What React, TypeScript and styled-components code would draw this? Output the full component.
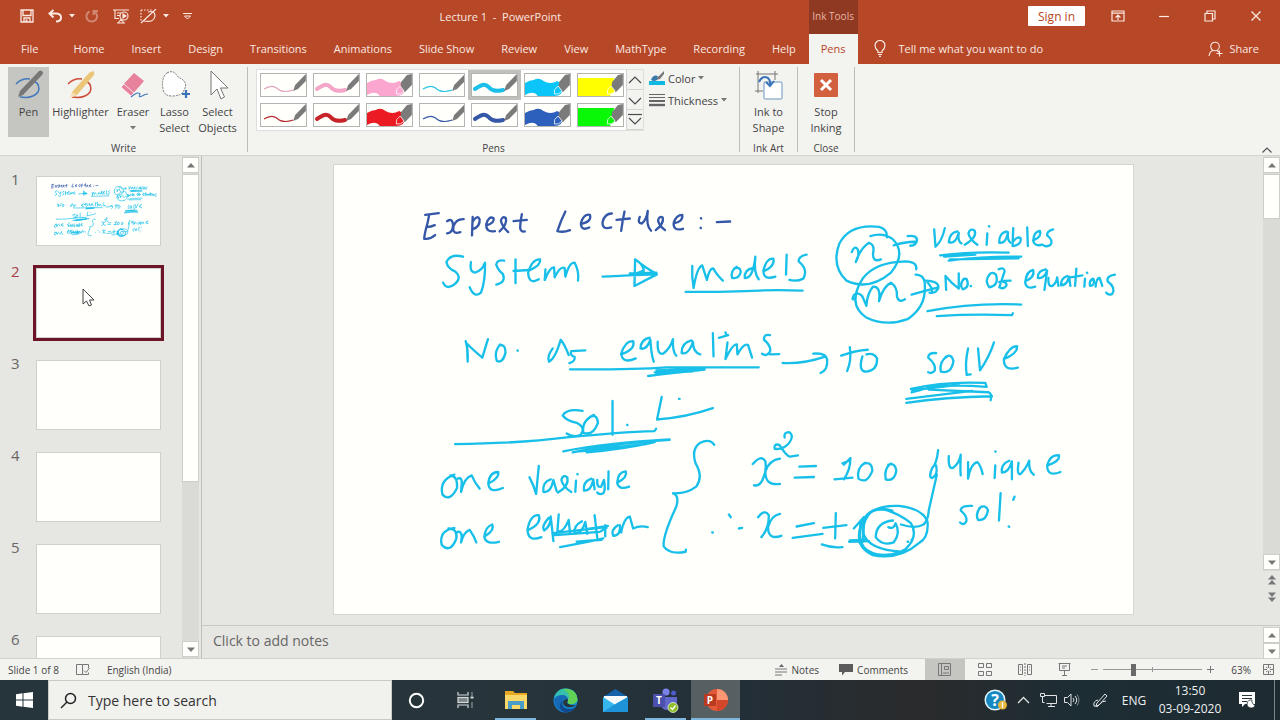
import React from "react";
import styled, { createGlobalStyle } from "styled-components";

const GlobalStyle = createGlobalStyle`
  *, *::before, *::after { box-sizing: border-box; }
  body {
    margin: 0;
    font-family: "Open Sans", "Noto Sans", sans-serif;
    font-size: 11px;
    color: #444;
    background: #e6e6e3;
  }
  button, input {
    font: inherit;
    color: inherit;
    border: 0;
    padding: 0;
    margin: 0;
    background: none;
  }
  svg { display: block; flex: none; }
`;

const Window = styled.div`
  display: grid;
  grid-template-rows: auto auto minmax(0, 1fr) auto auto;
  grid-template-columns: minmax(0, 1fr);
  height: 100vh;
`;

/* ---------- header ---------- */

const Header = styled.header`
  display: grid;
  grid-template-columns: auto auto 1fr;
  grid-template-rows: 34px 30px;
  background: #b64727;
  color: #fbe9e2;
`;

const TitleBar = styled.div`
  display: flex;
  align-items: center;
  padding: 0 0 2px 20px;
`;

const QuickAccess = styled.div`
  display: flex;
  align-items: center;
  gap: 6px;
`;

const IconButton = styled.button<{ $dim?: boolean; $lead?: number }>`
  display: flex;
  align-items: center;
  padding-left: ${(p) => p.$lead ?? 0}px;
  opacity: ${(p) => (p.$dim ? 0.4 : 1)};
`;

const DocTitle = styled.div`
  flex: 1;
  text-align: center;
  white-space: pre;
`;

const ContextTitle = styled.div`
  display: flex;
  align-items: center;
  justify-content: center;
  padding-bottom: 2px;
  font-size: 10px;
  background: #8f3822;
  color: #e9b7a5;
`;

const WindowActions = styled.div`
  display: flex;
  align-items: center;
  justify-content: flex-end;
  gap: 32px;
  padding: 0 17px 2px 0;
`;

const SignIn = styled.button`
  width: 57px;
  height: 20px;
  background: #fff;
  color: #b64727;
  font-size: 12px;
  border-radius: 1px;
  margin-right: -6px;
`;

const Tabs = styled.nav`
  display: flex;
  padding-left: 7px;
`;

const Tab = styled.button<{ $active?: boolean }>`
  height: 30px;
  padding: 0 ${(p) => (p.$active ? 12 : 13)}px 2px ${(p) => (p.$active ? 12 : 14)}px;
  white-space: nowrap;
  background: ${(p) => (p.$active ? "#f3f3f0" : "transparent")};
  color: ${(p) => (p.$active ? "#b64727" : "inherit")};
`;

const FileTab = styled(Tab)`
  padding-right: 21px;
`;

const TellMe = styled.div`
  display: flex;
  align-items: center;
  justify-content: space-between;
  padding: 0 21px 1px 16px;
`;

const InlineLabel = styled.button<{ $gap?: number }>`
  display: flex;
  align-items: center;
  gap: ${(p) => p.$gap ?? 4}px;
  white-space: nowrap;
`;

/* ---------- ribbon ---------- */

const Ribbon = styled.section`
  display: flex;
  height: 92px;
  background: #f3f3f0;
  border-bottom: 1px solid #d3d3d0;
  padding-top: 3px;
`;

const Group = styled.div<{ $width: number }>`
  display: flex;
  flex-direction: column;
  justify-content: space-between;
  width: ${(p) => p.$width}px;
  height: 85px;
  border-right: 1px solid #bdbdba;
`;

const GroupBody = styled.div<{ $indent?: number; $center?: boolean }>`
  display: flex;
  justify-content: ${(p) => (p.$center ? "center" : "flex-start")};
  padding-left: ${(p) => p.$indent ?? 0}px;
`;

const GroupName = styled.div`
  text-align: center;
  font-size: 10px;
  line-height: 12px;
  height: 10px;
`;

const Tool = styled.button<{ $width: number; $active?: boolean }>`
  display: flex;
  flex-direction: column;
  align-items: center;
  width: ${(p) => p.$width}px;
  height: 70px;
  padding-top: 3px;
  line-height: 16px;
  white-space: nowrap;
  background: ${(p) => (p.$active ? "#c5c5c2" : "transparent")};
`;

const ToolText = styled.span`
  display: flex;
  flex-direction: column;
  align-items: center;
  margin-top: 3px;
`;

const Gallery = styled.div`
  display: flex;
  width: 388px;
  height: 62px;
  margin: 2px 5px 0 8px;
  border: 1px solid #dededb;
  background: #fff;
`;

const Swatches = styled.div`
  flex: 1;
  display: grid;
  grid-template-columns: repeat(7, 1fr);
  grid-auto-rows: 24px;
  gap: 6px;
  padding: 3px 2px 3px 3px;
`;

const Swatch = styled.button<{ $active?: boolean }>`
  border: 1px solid #b4b4b1;
  background: #fffffc;
  outline: ${(p) => (p.$active ? "3px solid #c0c0bd" : "none")};
  overflow: hidden;
  svg { width: 100%; height: 100%; }
`;

const GallerySteps = styled.div`
  width: 17px;
  display: grid;
  grid-template-rows: 1fr 1fr 1fr;
  background: #f3f3f0;
`;

const Step = styled.button`
  display: flex;
  align-items: center;
  justify-content: center;
  border: 1px solid #d3d3d0;
  border-width: 0 0 1px 1px;
`;

const PenOptions = styled.div`
  display: flex;
  flex-direction: column;
  gap: 6px;
  padding-top: 3px;
`;

const PenOption = styled(InlineLabel)`
  height: 16px;
`;

const RibbonEnd = styled.div`
  flex: 1;
  display: flex;
  align-items: flex-end;
  justify-content: flex-end;
  padding: 0 8px 2px 0;
`;

/* ---------- workspace ---------- */

const Main = styled.main`
  display: grid;
  grid-template-columns: 182px 17px minmax(0, 1fr);
  min-height: 0;
  background: #e6e6e3;
`;

const SlideList = styled.ol`
  list-style: none;
  margin: 0;
  padding: 17px 0 0 8px;
  overflow: hidden;
  min-height: 0;
`;

const SlideItem = styled.li<{ $active?: boolean }>`
  display: flex;
  height: 92px;
  color: ${(p) => (p.$active ? "#a8424c" : "#666")};
`;

const SlideNumber = styled.span`
  width: 25px;
  padding-left: 3px;
  font-size: 15px;
  line-height: 18px;
  margin-top: -3px;
`;

const Thumb = styled.button<{ $active?: boolean }>`
  position: relative;
  width: 131px;
  height: 76px;
  border: 3px solid ${(p) => (p.$active ? "#6d1427" : "transparent")};
  background-clip: padding-box;
`;

const ThumbPage = styled.span`
  display: block;
  width: 100%;
  height: 100%;
  background: #fffffc;
  border: 1px solid #cfcfcc;
  svg { width: 100%; height: 100%; }
`;

const Pointer = styled.svg`
  position: absolute;
  left: 46px;
  top: 20px;
`;

const ScrollBar = styled.div`
  display: flex;
  flex-direction: column;
  gap: 1px;
  padding: 1px 0;
  width: 17px;
  min-height: 0;
  background: #dadad7;
`;

const ScrollButton = styled.button<{ $plain?: boolean }>`
  display: flex;
  flex: none;
  align-items: center;
  justify-content: center;
  height: ${(p) => (p.$plain ? 17 : 16)}px;
  background: ${(p) => (p.$plain ? "#e6e6e3" : "#fffffc")};
  border: ${(p) => (p.$plain ? "0" : "1px solid #cdcdca")};
`;

const ScrollThumb = styled.div<{ $percent: number }>`
  height: ${(p) => p.$percent}%;
  background: #fffffc;
  border: 1px solid #cdcdca;
`;

const ScrollTrack = styled.div`
  flex: 1;
  min-height: 0;
`;

const EditorScroll = styled.div`
  display: flex;
  flex-direction: column;
  padding-bottom: 20px;
  ${ScrollBar} { flex: 1; }
`;

const Editor = styled.div`
  display: grid;
  grid-template-rows: minmax(0, 1fr) 33px;
  margin-left: 2px;
  min-height: 0;
  border-left: 1px solid #bdbdba;
`;

const Stage = styled.div`
  display: flex;
  min-height: 0;
`;

const Canvas = styled.div`
  flex: 1;
  min-width: 0;
  overflow: hidden;
  padding: 8px 129px 0 131px;
`;

const Slide = styled.div`
  aspect-ratio: 16 / 9;
  background: #fffffc;
  border: 1px solid #d5d5d2;
  svg { width: 100%; height: 100%; }
`;

const NotesPane = styled.div`
  display: flex;
  border-top: 1px solid #c8c8c5;
`;

const NotesInput = styled.input`
  flex: 1;
  padding: 0 0 3px 11px;
  font-size: 14px;
  outline: 0;
  &::placeholder { color: #666; opacity: 1; }
`;

const NotesScroll = styled(ScrollBar)`
  background: none;
  gap: 0;
`;

/* ---------- status bar ---------- */

const StatusBar = styled.footer`
  display: flex;
  align-items: center;
  height: 22px;
  padding: 0 6px 0 8px;
  border-top: 1px solid #d0d0cd;
  background: #f3f3f0;
  font-size: 10px;
`;

const StatusLeft = styled.div`
  flex: 1;
  display: flex;
  align-items: center;
  gap: 17px;
`;

const StatusToggles = styled.div`
  display: flex;
  gap: 20px;
  margin-right: 17px;
`;

const ViewButton = styled.button<{ $active?: boolean }>`
  display: flex;
  align-items: center;
  justify-content: center;
  width: 40px;
  height: 21px;
  background: ${(p) => (p.$active ? "#c5c5c2" : "transparent")};
`;

const Zoom = styled.div`
  display: flex;
  align-items: center;
  gap: 4px;
  padding-left: 5px;
`;

const ZoomSlider = styled.input`
  appearance: none;
  width: 99px;
  height: 14px;
  background:
    linear-gradient(#999, #999) 50% 50% / 1px 5px no-repeat,
    linear-gradient(#999, #999) 0 50% / 100% 1px no-repeat;
  &::-webkit-slider-thumb {
    appearance: none;
    width: 5px;
    height: 12px;
    background: #6a6a6a;
  }
`;

const ZoomValue = styled.button`
  width: 32px;
  margin-right: 8px;
  text-align: right;
`;

/* ---------- task bar ---------- */

const TaskBar = styled.footer`
  display: flex;
  height: 40px;
  background: linear-gradient(90deg, #26343b, #27353b 40%, #232f37 58%, #2a2b2c 72%, #1d2d34 84%, #1e2b31);
  color: #eef1f2;
  font-size: 12px;
`;

const Start = styled.button`
  width: 48px;
  display: flex;
  align-items: center;
  justify-content: center;
`;

const Search = styled.label`
  display: flex;
  align-items: center;
  gap: 11px;
  width: 344px;
  padding-left: 11px;
  background: #f1f1ee;
  border: 1px solid #c9c9c6;
  color: #222;
  font-size: 14px;
  input { flex: 1; outline: 0; min-width: 0; }
  input::placeholder { color: #333; opacity: 1; }
`;

const AppButton = styled.button<{ $width?: number; $open?: boolean; $active?: boolean }>`
  display: flex;
  align-items: center;
  justify-content: center;
  width: ${(p) => p.$width ?? 41}px;
  padding-top: ${(p) => (p.$open ? 2 : 0)}px;
  background: ${(p) => (p.$active ? "#566063" : "transparent")};
  border-bottom: ${(p) => (p.$open ? "2px solid #7fb6de" : "0")};
`;

const Apps = styled.div`
  display: flex;
  gap: 9px;
  padding: 0 5px;
`;

const Tray = styled.div`
  flex: 1;
  display: flex;
  align-items: center;
  justify-content: flex-end;
`;

const TrayButton = styled.button<{ $width: number }>`
  display: flex;
  align-items: center;
  justify-content: center;
  width: ${(p) => p.$width}px;
  height: 40px;
`;

const Clock = styled.button`
  display: flex;
  flex-direction: column;
  align-items: center;
  justify-content: center;
  width: 76px;
  line-height: 18px;
`;

const DesktopEdge = styled.div`
  width: 6px;
  margin-left: 8px;
  height: 40px;
  border-left: 1px solid #7b868a;
`;

/* ---------- ink on the first slide ---------- */

type InkBlock = { x: number; y: number; color: string; strokes: string[] };

const CYAN = "#17bfe9";
const NAVY = "#3557a8";

const ink: InkBlock[] = [
  {
    x: 66, y: 26, color: NAVY,
    strokes: [
      "M115 67L74 72M86 72Q82 96 78 108Q72 132 71 144Q88 147 104 133M78 109Q92 108 103 103",
      "M140 91Q157 80 158 104Q157 126 140 128M190 85Q166 84 159 108Q155 132 180 124",
      "M217 78L215 134M217 92Q232 70 238 86Q240 108 216 116",
      "M258 104Q284 96 280 82Q265 74 258 100Q256 126 284 121",
      "M298 122Q322 100 317 82Q306 74 302 90Q306 108 324 124",
      "M365 70Q360 96 360 112Q362 124 374 122M340 91L380 87",
      "M496 62Q482 90 472 121Q490 126 510 118",
      "M545 99Q576 92 570 72Q552 68 543 96Q542 122 568 110",
      "M636 68Q614 68 608 94Q606 118 634 110",
      "M674 62Q668 90 664 120M650 87L690 83",
      "M720 78Q712 98 726 98Q740 88 744 60M744 60Q738 104 754 120",
      "M768 118Q794 98 789 80Q778 74 775 90Q780 106 796 118",
      "M822 98Q852 92 848 72Q830 72 822 96Q820 122 850 114",
      "M904 82l1 1M903 111l1 1M952 94L992 92",
    ],
  },
  {
    x: 66, y: 26, color: CYAN,
    strokes: [
      "M188 198Q150 188 138 214Q142 234 164 242Q186 260 164 280Q138 300 128 276",
      "M212 214Q206 244 224 246Q246 240 254 216Q256 270 242 306Q222 324 208 290",
      "M312 210Q290 206 288 222Q294 240 308 250Q318 276 288 282",
      "M346 206L346 278M340 241L386 238",
      "M386 240Q424 224 420 206Q396 204 384 246Q386 284 416 266",
      "M436 236L434 268Q450 228 462 230L464 260Q480 226 494 232L496 258Q508 214 524 216Q538 242 534 270",
      "M608 258Q680 254 772 251M706 206L704 286L770 252M706 206Q735 230 770 250M712 210Q732 224 732 240L710 248M690 248L770 246",
      "M878 226Q876 260 882 292Q892 230 908 224L922 268Q930 230 942 234Q950 250 970 270",
      "M1012 228Q992 240 998 262Q1018 266 1024 244Q1022 226 1004 234",
      "M1062 232Q1034 236 1036 262Q1060 266 1068 198Q1062 246 1078 266",
      "M1092 242Q1128 228 1122 204Q1102 200 1092 240Q1092 270 1128 258",
      "M858 304Q1000 304 1080 300Q1130 297 1210 300",
      "M196 452Q204 480 202 514L200 460Q224 484 246 502L263 446",
      "M300 462Q280 484 290 512Q308 520 316 486Q316 462 298 464M352 480l1 1",
      "M458 474Q440 498 447 514Q466 504 482 448Q494 462 506 494M556 480L514 482Q508 494 524 500Q526 514 508 518",
      "M510 537Q700 538 800 531L1078 531M745 557Q820 548 915 538M770 540L915 535M765 546L890 541M770 550L880 543",
      "M664 492Q708 476 700 452Q676 450 664 490Q668 522 708 504",
      "M750 442Q724 446 722 474Q740 480 752 448Q754 490 762 514",
      "M774 454Q772 494 790 490Q812 474 820 446Q818 484 830 496",
      "M876 450Q846 456 846 488Q868 494 880 454Q880 486 902 492",
      "M940 428L942 498M958 442L986 434M978 426l2 6",
      "M984 456L978 506Q1000 460 1012 462L1014 492Q1034 456 1046 464L1058 502",
      "M1112 434Q1092 430 1094 448Q1116 466 1112 484Q1102 500 1088 490M1112 492L1140 491",
    ],
  },
  {
    x: 426, y: 26, color: CYAN,
    strokes: [
      "M82 192L80 252M142 192Q118 196 118 212Q148 236 132 264Q112 274 90 268",
      "M384 140Q386 114 360 108Q270 98 240 160Q216 226 262 270Q330 302 396 246Q444 186 400 144Q370 124 334 136",
      "M278 184Q286 162 296 176Q302 196 290 214Q304 172 330 156Q348 162 342 188Q340 216 366 206",
      "M404 164Q440 152 472 153M446 136Q476 132 474 150Q472 164 454 165",
      "M526 116L530 168Q550 150 558 112",
      "M596 122Q572 126 570 154Q590 162 600 126Q596 152 608 158",
      "M618 162Q656 140 648 120Q634 110 629 128Q634 146 656 162",
      "M686 128L684 162M691 106l1 1",
      "M744 122Q720 128 722 156Q742 160 748 124Q746 150 756 156",
      "M764 112L762 166Q790 162 786 142Q776 136 764 152M806 110L808 166",
      "M826 148Q852 136 844 120Q826 122 824 150Q828 168 852 162",
      "M884 116Q864 122 866 134Q886 150 876 162Q866 170 856 164",
      "M544 194Q640 182 750 186M556 198L650 192M570 210Q680 196 788 198M574 206L780 203",
      "M472 236Q476 214 440 212Q350 214 312 262Q262 340 320 380Q380 410 446 386Q500 350 498 290Q500 252 470 252",
      "M286 324Q276 332 284 314Q298 302 310 318L322 346Q324 310 342 288Q366 286 360 332Q372 288 396 276Q416 290 414 318Q420 338 438 326",
      "M458 312Q500 300 538 290M500 270Q544 272 538 294Q530 310 512 306M505 274Q520 290 520 304",
      "M562 298L560 256Q580 280 600 294L600 248",
      "M616 264Q600 282 612 296Q634 290 624 266Q618 262 612 268M636 286l1 1",
      "M694 250Q676 270 692 290Q722 284 712 252Q700 240 690 254",
      "M720 236Q736 228 738 242Q730 266 722 290Q736 298 744 284Q744 270 722 274M735 271L756 270",
      "M800 272Q830 260 824 238Q804 240 800 276Q804 298 830 288",
      "M862 236Q836 240 838 262Q856 266 866 240L858 298",
      "M870 262Q868 290 882 286Q896 274 896 260L900 286",
      "M926 256Q906 264 908 284Q926 284 932 258L936 286M954 234L950 286M936 260L972 254M980 264L978 288M986 246l1 1",
      "M1004 264Q990 272 996 286Q1010 284 1006 266M1012 288Q1014 262 1024 262L1032 286",
      "M1070 252Q1044 256 1048 272Q1074 292 1062 310Q1050 316 1044 306",
      "M506 362Q640 336 788 342M534 377Q640 370 760 374L763 368",
      "M70 518Q130 522 200 498M162 490Q200 486 204 508Q206 540 184 548",
      "M272 470Q278 510 264 542M246 496Q290 480 326 478M310 498Q296 544 322 544Q356 540 354 504Q344 486 322 492",
      "M532 488Q508 486 508 502Q532 522 528 540Q520 552 508 546",
      "M568 496Q540 512 546 544Q578 552 584 512Q578 488 560 500",
      "M628 474Q618 520 624 554L636 552M658 474L664 540Q692 500 706 456",
      "M736 506Q776 490 776 468Q756 464 736 506Q734 544 778 532",
      "M456 596Q560 572 680 578L684 590Q590 582 520 590L458 606M510 598L690 606Q702 612 696 630M442 626L640 602M442 638Q560 620 700 618M460 600L600 584",
    ],
  },
  {
    x: 86, y: 216, color: CYAN,
    strokes: [
      "M488 92Q440 84 428 106Q440 122 470 128Q500 144 482 164Q460 174 440 160",
      "M522 104Q484 122 490 158Q520 168 534 128Q532 100 510 110M578 62L578 164M622 134l1 1",
      "M726 50L712 118Q800 112 880 84M778 56l2 0",
      "M104 192Q300 190 440 172Q600 156 704 153L709 146",
      "M430 214Q560 188 750 178M458 217Q600 186 750 179M500 217Q620 206 705 186M480 214L690 190M520 212L680 192",
      "M102 284Q56 300 66 344Q88 368 110 324Q112 288 90 286",
      "M112 296Q126 290 124 312L122 336Q132 292 154 286Q164 310 178 326",
      "M206 310Q238 294 234 276Q208 276 204 310Q206 342 248 324",
      "M328 292Q340 314 348 342Q352 300 356 258",
      "M392 298Q366 306 370 336Q392 340 400 300L410 334",
      "M414 338Q448 318 442 292Q428 282 424 300Q430 322 454 336",
      "M468 302L466 336M472 282l1 1M514 296Q488 306 492 332Q514 334 520 298L524 328",
      "M532 300Q530 324 544 320L552 300Q558 330 550 340Q540 346 532 338M566 274L565 328",
      "M592 308Q624 292 618 274Q594 276 592 308Q596 332 628 320",
      "M102 444Q54 452 64 496Q90 522 108 476Q112 446 84 446",
      "M108 458Q124 450 124 472L122 488Q130 456 148 450Q162 470 168 488",
      "M196 468Q224 450 216 434Q196 440 192 470Q196 496 236 486",
      "M326 450Q366 430 356 406Q330 404 322 450Q324 488 364 472",
      "M386 414Q362 440 372 452Q392 440 392 410L400 484",
      "M416 404L412 454Q430 460 446 420L450 460M486 424Q460 438 464 460Q486 462 496 426L502 462",
      "M524 406Q528 440 532 474M500 448L564 438M556 436L556 470",
      "M594 436Q572 450 580 468Q604 466 600 436M604 458Q612 414 630 410L640 446Q660 436 684 442",
      "M398 460L560 442M404 466L540 456L560 444M420 502Q500 488 550 476M470 486L545 480",
      "M884 194Q870 174 842 188Q814 206 828 250Q852 290 830 320Q800 342 760 340Q780 346 770 380Q728 470 732 500Q750 526 798 516L799 510",
    ],
  },
  {
    x: 366, y: 236, color: CYAN,
    strokes: [
      "M88 344l6 8M38 398l2 0M118 386l10 -2",
      "M160 192Q186 162 198 184Q202 214 192 232Q184 260 164 256M242 176Q210 180 198 214Q196 258 242 252",
      "M256 112Q252 96 270 96Q286 108 268 130Q250 150 226 146Q222 130 240 134Q260 166 272 170L296 166",
      "M300 200L350 198M286 233L344 231",
      "M434 194L454 174Q454 210 434 238M430 190L450 182M406 238L460 233",
      "M498 188Q472 204 478 236Q504 254 520 212Q518 182 492 192",
      "M576 190Q554 206 560 238Q586 246 592 212Q588 186 568 194",
      "M176 352Q196 326 208 346Q210 384 186 412M242 342Q216 346 206 382Q206 422 246 408",
      "M292 380L344 370M280 414L370 402M410 340L408 416M372 384L442 376M368 434Q400 446 430 442",
      "M464 386L494 352L492 426M450 426L510 424M484 366L482 430M452 422L500 420",
      "M560 330Q512 322 494 360Q466 420 506 456Q560 486 620 448Q660 410 636 370Q600 340 548 326Q500 330 484 380Q466 440 520 466Q600 482 660 430Q690 414 686 366Q672 326 600 318Q550 316 518 334Q488 364 494 404Q510 450 606 456",
      "M500 350Q528 318 580 332M490 440Q530 480 600 458",
      "M582 362Q532 366 530 412Q550 440 584 428Q606 400 590 370Q584 390 568 382M626 426l2 0M638 420l2 0",
      "M606 374Q650 388 674 374Q688 362 690 330L714 224",
      "M718 150Q714 190 700 204Q688 232 700 234Q718 226 712 196",
      "M750 168Q748 208 762 204Q782 190 786 164Q784 208 786 226M808 186L808 236Q816 190 836 186Q846 196 852 222",
      "M890 196L888 234M890 154l1 1M932 182Q906 192 910 218Q930 218 940 184L940 238",
      "M960 188Q954 226 966 222Q984 204 992 182Q990 214 1006 224",
      "M1048 196Q1084 184 1082 166Q1056 162 1046 196Q1046 232 1086 216",
      "M820 318Q786 316 786 332Q808 350 802 366Q794 378 784 368",
      "M848 320Q828 338 838 360Q862 364 868 332Q862 312 842 324M906 280L901 362M948 290L944 300M930 380l2 1",
    ],
  },
];

const InkDrawing = ({ bold }: { bold?: boolean }) => (
  <svg viewBox="0 0 800 450" role="img" aria-label="Handwritten lecture notes" fill="none" strokeLinecap="round" strokeLinejoin="round">
    {ink.map((block, i) => (
      <g key={i} transform={`translate(${block.x} ${block.y}) scale(0.3333)`} stroke={block.color} strokeWidth={bold ? 13 : 7}>
        {block.strokes.map((d) => <path key={d} d={d} />)}
      </g>
    ))}
  </svg>
);

/* ---------- small drawings ---------- */

const Caret = ({ color = "currentColor" }: { color?: string }) => (
  <svg width="6" height="4" viewBox="0 0 6 4"><path d="M0 0h6L3 3.5z" fill={color} /></svg>
);

const Triangle = ({ up, double }: { up?: boolean; double?: boolean }) => (
  <svg width="8" height={double ? 10 : 5} viewBox={double ? "0 0 8 10" : "0 0 8 5"} fill="#777">
    <g transform={up ? undefined : `rotate(180 4 ${double ? 5 : 2.5})`}>
      <path d="M0 4.5L4 0L8 4.5z" />
      {double && <path d="M0 9.5L4 5L8 9.5z" />}
    </g>
  </svg>
);

const Chevron = ({ up, bar }: { up?: boolean; bar?: boolean }) => (
  <svg width="14" height="14" viewBox="0 0 14 14" fill="none" stroke="#4a4a4a" strokeWidth="1.2">
    {bar && <path d="M0 1.500h14" />}
    <path d={up ? "M1 10l6-6 6 6" : "M1 5l6 6 6-6"} />
  </svg>
);

type PenKind = "thin" | "medium" | "thick" | "marker";

const PenSwatch = ({ kind, color }: { kind: PenKind; color: string }) => (
  <svg viewBox="0 0 46 22" preserveAspectRatio="none">
    {kind === "thin" && <path d="M3 15C8 12 12 11 16 14C21 19 27 18 33 16" fill="none" stroke={color} strokeWidth="1.200" />}
    {kind === "medium" && <path d="M3 15C9 11 13 9 17 13C21 18 27 17 32 16" fill="none" stroke={color} strokeWidth="4" strokeLinecap="round" />}
    {kind === "thick" && <path d="M0 9Q5 6 9 6Q14 3 19 7Q26 11 33 7Q38 9 38 15Q39 22 30 22H13Q9 16 0 21Z" fill={color} />}
    {kind === "marker" && <path d="M0 4H37L33 22H0Z" fill={color} />}
    {kind === "thin" || kind === "medium" ? (
      <path d="M46 0L35 11L33 17L38 15L46 7Z" fill="#7b7b7b" />
    ) : (
      <>
        <path d="M46 0L41 1L35 8L34 16L39 18L46 11Z" fill="#7b7b7b" />
        <path d="M34 12Q29 15 30 20Q35 21 38 17Z" fill={color} stroke="#fff" strokeWidth=".8" />
      </>
    )}
  </svg>
);

const swatches: { kind: PenKind; color: string; active?: boolean }[] = [
  { kind: "thin", color: "#e2a3bf" },
  { kind: "medium", color: "#f3a6c8" },
  { kind: "thick", color: "#fba6cf" },
  { kind: "thin", color: "#27c4e6" },
  { kind: "medium", color: "#1cbfe8", active: true },
  { kind: "thick", color: "#0cc5f8" },
  { kind: "marker", color: "#ffff00" },
  { kind: "thin", color: "#b9292f" },
  { kind: "medium", color: "#c62429" },
  { kind: "thick", color: "#ea1b22" },
  { kind: "thin", color: "#3557a8" },
  { kind: "medium", color: "#3557a8" },
  { kind: "thick", color: "#2d60bd" },
  { kind: "marker", color: "#08f808" },
];

const SaveIcon = () => (
  <svg width="14" height="14" viewBox="0 0 14 14" fill="none" stroke="currentColor" strokeWidth="1.300">
    <path d="M1 1h12v12H1zM3 1v5.500h8V1M4 13V9h6v4" /><path d="M5.500 10.500h2V13h-2z" fill="currentColor" stroke="none" />
  </svg>
);
const UndoIcon = () => (
  <svg width="15" height="14" viewBox="0 0 15 14" fill="none" stroke="currentColor" strokeWidth="2">
    <path d="M5.500 1L1.500 4.500L5.500 8.500M2 4.500H8.500Q13 5 13 8.500Q13 12.500 8 12.500" />
  </svg>
);
const RedoIcon = () => (
  <svg width="14" height="14" viewBox="0 0 14 14" fill="none" stroke="currentColor" strokeWidth="2">
    <path d="M9 2.500A5.300 5.300 0 1 1 4.500 2.500M8.500 6V2H13" />
  </svg>
);
const PresentIcon = () => (
  <svg width="17" height="15" viewBox="0 0 17 15" fill="none" stroke="currentColor" strokeWidth="1.100">
    <path d="M0 1h16M2 1v8.500h4M4 4h4M4 6.500h3M5 14l3-3.500l3 3.500M4 14h8" /><circle cx="11" cy="7" r="4" /><path d="M10 5l3 2l-3 2z" fill="currentColor" />
  </svg>
);
const PenFrameIcon = () => (
  <svg width="17" height="15" viewBox="0 0 17 15" fill="none" stroke="currentColor" strokeWidth="1.200">
    <path d="M1 1h12M1 1v12" strokeDasharray="1.500 1.500" /><path d="M1 14L16 0M8 3Q15 1 15 7Q14 14 4 12" />
  </svg>
);
const MoreIcon = () => (
  <svg width="9" height="7" viewBox="0 0 9 7" fill="none" stroke="currentColor"><path d="M0 .5h9M1.500 3h6L4.500 6z" /></svg>
);

const PenIcon = () => (
  <svg width="30" height="31" viewBox="0 0 30 31">
    <path d="M2 14Q8 8 16 9M20 11Q27 15 24 22Q19 29 6 27" fill="none" stroke="#4179bd" strokeWidth="1.500" />
    <path d="M28 1Q30 3 28 5L9 25L4 27L6 21L25 1Q27 0 28 1Z" fill="#777" />
  </svg>
);
const HighlighterIcon = () => (
  <svg width="30" height="31" viewBox="0 0 30 31">
    <path d="M2 14Q8 8 16 9M20 11Q27 15 24 22Q19 29 6 27" fill="none" stroke="#cc4c36" strokeWidth="1.500" />
    <path d="M23 3L27 1Q29 2 28 5L11 25L6 27L6 22Z" fill="#ecc678" /><path d="M6 22L11 25L4 28Z" fill="#f6dfb0" />
  </svg>
);
const EraserIcon = () => (
  <svg width="30" height="31" viewBox="0 0 30 31">
    <path d="M16 3L26 11L13 26L3 17Z" fill="#e8819c" /><path d="M6 14L16 23L13 26L3 17Z" fill="#e8819c" stroke="#fff" strokeWidth=".8" />
    <path d="M13 27Q20 21 22 24Q20 28 24 26Q27 24 30 24" fill="none" stroke="#4179bd" strokeWidth="1.200" />
  </svg>
);
const LassoIcon = () => (
  <svg width="30" height="31" viewBox="0 0 30 31">
    <path d="M7 3Q12 0 16 4Q18 8 22 9Q28 14 24 20Q22 26 12 26Q4 26 3 19Q1 8 7 3Z" fill="#fff" stroke="#777" strokeDasharray="2 1" />
    <path d="M26 20v8M22 24h8" stroke="#3a74b8" strokeWidth="2.200" />
  </svg>
);
const ArrowIcon = () => (
  <svg width="30" height="31" viewBox="0 0 30 31">
    <path d="M8 1V25L14 19L18 29L21.500 27L17.500 18H25Z" fill="#fff" stroke="#777" />
  </svg>
);
const InkShapeIcon = () => (
  <svg width="30" height="31" viewBox="0 0 30 31" fill="none" stroke="#777">
    <path d="M2 4h22M4 1v22M21 1v9M1 21h8" /><rect x="10" y="12" width="18" height="17" rx="1" fill="#fff" stroke="#6b94bf" />
    <path d="M5 12Q8 5 14 8Q17 11 16 15M12 12L16 16L20 11" stroke="#3a74b8" strokeWidth="2" />
  </svg>
);
const StopIcon = () => (
  <svg width="30" height="31" viewBox="0 0 30 31">
    <rect x="3" y="3" width="24" height="24" rx="1" fill="#d2603f" /><path d="M10 10L20 20M20 10L10 20" stroke="#fff" strokeWidth="3" />
  </svg>
);
const ColorIcon = () => (
  <svg width="16" height="16" viewBox="0 0 16 16">
    <path d="M0 11h16v4H0z" fill="#0fb9e4" /><path d="M15 1L9 7L7 10L11 9L15 4Z" fill="#777" /><path d="M2 10Q4 4 9 6L8 10Q5 12 2 10Z" fill="#3779a8" />
  </svg>
);
const ThicknessIcon = () => (
  <svg width="16" height="14" viewBox="0 0 16 14" stroke="#666"><path d="M0 1.500h16M0 4.500h16" /><path d="M0 8h16" strokeWidth="2" /><path d="M0 12h16" strokeWidth="2.400" /></svg>
);

const BulbIcon = () => (
  <svg width="12" height="17" viewBox="0 0 12 17" fill="none" stroke="currentColor" strokeWidth="1.200">
    <path d="M4 12.500V11Q1 8.500 1 5.500A5 5 0 0 1 11 5.500Q11 8.500 8 11V12.500ZM4 14.500H8M5 16.300H7" />
  </svg>
);
const ShareIcon = () => (
  <svg width="15" height="16" viewBox="0 0 15 16" fill="none" stroke="currentColor" strokeWidth="1.100">
    <circle cx="7" cy="5.500" r="4.300" /><path d="M1 15Q2 10 5 9.500M9 9.500L11 11M11.500 9.500V15.500M8.500 12.500H14.500" />
  </svg>
);
const RibbonDisplayIcon = () => (
  <svg width="14" height="12" viewBox="0 0 14 12" fill="none" stroke="currentColor" strokeWidth="1.200"><path d="M1 1h12v10H1zM1 3.200h12M7 10V5.500M4.500 7.500L7 5L9.500 7.500" /></svg>
);
const MinimizeIcon = () => <svg width="14" height="12" viewBox="0 0 14 12" stroke="currentColor" strokeWidth="1.200"><path d="M2 6.500h10" /></svg>;
const RestoreIcon = () => (
  <svg width="14" height="12" viewBox="0 0 14 12" fill="none" stroke="currentColor" strokeWidth="1.200"><path d="M2 3.500h7.500v7.500H2zM4 3.500V1h8v8H9.500" /></svg>
);
const CloseIcon = () => <svg width="14" height="12" viewBox="0 0 14 12" stroke="currentColor" strokeWidth="1.300"><path d="M2.500 1.500l9 9M11.500 1.500l-9 9" /></svg>;

const BookIcon = () => (
  <svg width="14" height="13" viewBox="0 0 14 13" fill="none" stroke="#777"><path d="M6.500 11.500H.5V1.500H6.500V11.500M6.500 1.500H12.500V5M8 7.500L10 9.500L13.500 5M6.500 11.500H12.500V9.500" /></svg>
);
const NotesIcon = () => (
  <svg width="13" height="12" viewBox="0 0 13 12" stroke="#777"><path d="M4 3L6.500 0L9 3z" fill="#666" stroke="none" /><path d="M0 5h12M0 8h12M0 11h7" /></svg>
);
const CommentIcon = () => <svg width="14" height="13" viewBox="0 0 14 13"><path d="M0 1h14v8H6l-3 3.500V9H0z" fill="#5b5b5b" /></svg>;

const viewIcons = [
  { name: "Normal", path: "M.5 .5h12v12H.5zM3.500 .5v12M6.500 3.500h4v3h-4zM5 10h6" },
  { name: "Slide Sorter", path: "M.5 .5h5v4h-5zM8.500 .5h5v4h-5zM.5 8.500h5v4h-5zM8.500 8.500h5v4h-5z" },
  { name: "Reading View", path: "M.5 1.500h4v10h-4zM9.500 1.500h4v10h-4zM7 0v2M7 3v2M7 6v2M7 9v2M7 12v1M2 4h1M2 7h1M11 4h1M11 7h1" },
  { name: "Slide Show", path: "M.5 .5h12M1.500 .5v7h10v-7M4 3h5M4 5h3M6.500 7.500v5M4 12.500h5" },
];

const FitIcon = () => (
  <svg width="11" height="11" viewBox="0 0 11 11" fill="none" stroke="#777"><path d="M.5 .5h10v10H.5zM5.500 1v3M5.500 7v3M1 5.500h3M7 5.500h3M3 3l1.500 1M8 3L6.500 4M3 8l1.500-1M8 8L6.500 7" /></svg>
);

const WindowsLogo = () => (
  <svg width="17" height="16" viewBox="0 0 17 16" fill="#fff"><path d="M0 2.300L6.500 1.300V7.500H0zM7.500 1.200L17 0V7.500H7.500zM0 8.500H6.500V14.700L0 13.700zM7.500 8.500H17V16L7.500 14.800z" /></svg>
);
const SearchIcon = () => (
  <svg width="17" height="17" viewBox="0 0 17 17" fill="none" stroke="#222" strokeWidth="1.500"><circle cx="10.500" cy="6.500" r="5" /><path d="M7 10L1 16" /></svg>
);
const CortanaIcon = () => <svg width="17" height="17" viewBox="0 0 17 17"><circle cx="8.500" cy="8.500" r="6.700" fill="none" stroke="#fff" strokeWidth="2" /></svg>;
const TaskViewIcon = () => (
  <svg width="17" height="16" viewBox="0 0 17 16" fill="none" stroke="#d6dadb" strokeWidth="1.200"><path d="M1 0v3h10V0M1 16v-3h10v3" /><rect x="1" y="5.500" width="10" height="5" fill="#7d878b" /><path d="M15 0v4M15 10v6" stroke="#89979c" /><path d="M13.500 5.500h3" strokeWidth="2" /></svg>
);
const ExplorerIcon = () => (
  <svg width="22" height="19" viewBox="0 0 22 19"><path d="M0 0h8l2 2h12v16H0z" fill="#e8a824" /><path d="M0 4h22v14H0z" fill="#fbd86a" /><path d="M3 10h16v8h-4v-4H7v4H3z" fill="#4a9cc9" /></svg>
);
const EdgeIcon = () => (
  <svg width="25" height="25" viewBox="0 0 25 25">
    <circle cx="12.500" cy="12.500" r="12" fill="#1688d2" /><path d="M1 10Q4 0 13 .5Q24 1 24.500 12Q23 17 16 16Q14 15 15 12Q14 7 8 7Q4 7 1 10Z" fill="#37bfae" /><path d="M15 1Q24 3 24.500 12Q23 17 16 16Q14 15 15 12Q19 6 10 1Z" fill="#62d257" />
    <path d="M15 11Q14 7 9 7Q3 8 1 12Q2 22 12 24.500Q6 20 9 14Q11 10 15 11Z" fill="#1569b5" /><path d="M10 12Q7 21 18 21Q22 20 23 18Q19 25 12 24.500Q3 20 10 12Z" fill="#114a8d" /><path d="M15 11Q10 11 10 15Q11 20 19 19L24 17Q17 18 14 15Q15 13 15 11Z" fill="#27353b" />
  </svg>
);
const MailIcon = () => (
  <svg width="25" height="23" viewBox="0 0 25 23"><path d="M0 8L12.500 0L25 8V14H0Z" fill="#1463aa" /><path d="M1 7h23v10H1z" fill="#f5f9fc" /><path d="M0 8L12.500 16L25 8V23H0Z" fill="#36b6ec" /><path d="M0 23L14 14L25 8V23Z" fill="#1f93d8" /></svg>
);
const TeamsIcon = () => (
  <svg width="26" height="25" viewBox="0 0 26 25">
    <circle cx="13" cy="4" r="3.600" fill="#7b83eb" /><circle cx="20.500" cy="5" r="2.500" fill="#5059c9" /><path d="M8 9h16v6q-1 6-6 6q-7 3-10-3z" fill="#6068cc" />
    <rect x="0" y="6" width="12" height="13" rx="1" fill="#4b50ad" /><text x="6" y="16" textAnchor="middle" fontSize="10" fontWeight="700" fill="#fff">T</text>
    <circle cx="20" cy="19.500" r="5" fill="#8fbf28" stroke="#e6ecd8" strokeWidth=".8" /><path d="M17.500 19.500l2 2l3-4" fill="none" stroke="#fff" strokeWidth="1.300" />
  </svg>
);
const PowerPointIcon = () => (
  <svg width="24" height="22" viewBox="0 0 24 22"><circle cx="13" cy="11" r="11" fill="#e35a39" /><path d="M13 0A11 11 0 0 1 24 11H13Z" fill="#fb9873" /><path d="M24 11A11 11 0 0 1 13 22V11Z" fill="#d2472c" /><rect x="0" y="5" width="12" height="12" rx="1" fill="#b93a20" /><text x="6" y="15" textAnchor="middle" fontSize="10" fontWeight="700" fill="#fff">P</text></svg>
);
const HelpIcon = () => (
  <svg width="24" height="23" viewBox="0 0 24 23"><circle cx="11" cy="11" r="9.800" fill="#1688bf" stroke="#e5f4fb" strokeWidth="1.500" /><text x="11" y="17" textAnchor="middle" fontSize="16" fontWeight="700" fill="#fff">?</text><circle cx="18.500" cy="16" r="4.500" fill="#e8b63c" /><path d="M18.500 13v6" stroke="#fff" strokeWidth="1.300" /></svg>
);
const TrayCaret = () => <svg width="13" height="8" viewBox="0 0 13 8" fill="none" stroke="#dfe3e4" strokeWidth="1.300"><path d="M1 7l5.500-5.500L12 7" /></svg>;
const NetworkIcon = () => <svg width="17" height="14" viewBox="0 0 17 14" fill="none" stroke="#dfe3e4"><path d="M4.500 2.500h12v8h-10M8 13.500h7M11 10.500v3M.5 .5h4v3h-4zM2.500 3.500v6h2" /></svg>;
const SpeakerIcon = () => <svg width="16" height="14" viewBox="0 0 16 14" fill="none" stroke="#dfe3e4"><path d="M.5 4.500h3L7 1v12L3.500 9.500h-3zM9 5q2 2 0 4M11 3q3.500 4 0 8" /><path d="M13 1.500q4 5.500 0 11" stroke="#7b868a" /></svg>;
const TrayPenIcon = () => <svg width="15" height="15" viewBox="0 0 15 15" fill="none" stroke="#dfe3e4"><path d="M12 1L14 3L6 12L3 13L4 10ZM5 7Q0 8 1 13Q5 15 7 11Q9 8 13 8" /></svg>;
const ActionIcon = () => (
  <svg width="17" height="16" viewBox="0 0 17 16"><path d="M0 0h16v12H6l-3 3v-3H0z" fill="#fff" /><path d="M3 3.500h10M3 6.500h10M3 9.500h5" stroke="#27353b" /><path d="M13 8a4 4 0 1 0 3 5a4 4 0 0 1-3-5z" fill="#fff" stroke="#27353b" strokeWidth=".8" /></svg>
);

/* ---------- page ---------- */

const tabs = ["Home", "Insert", "Design", "Transitions", "Animations", "Slide Show", "Review", "View", "MathType", "Recording", "Help"];

const writeTools = [
  { lines: ["Pen"], width: 41, icon: <PenIcon />, active: true },
  { lines: ["Highlighter"], width: 63, icon: <HighlighterIcon /> },
  { lines: ["Eraser"], width: 42, icon: <EraserIcon />, menu: true },
  { lines: ["Lasso", "Select"], width: 41, icon: <LassoIcon /> },
  { lines: ["Select", "Objects"], width: 45, icon: <ArrowIcon /> },
];

export default function App() {
  return (
    <>
      <GlobalStyle />
      <Window>
        <Header>
          <TitleBar>
            <QuickAccess>
              <IconButton aria-label="Save"><SaveIcon /></IconButton>
              <IconButton aria-label="Undo" $lead={8}><UndoIcon /></IconButton>
              <IconButton aria-label="Undo history"><Caret /></IconButton>
              <IconButton aria-label="Redo" $dim $lead={4}><RedoIcon /></IconButton>
              <IconButton aria-label="Start from beginning" $lead={8}><PresentIcon /></IconButton>
              <IconButton aria-label="Pen frame" $lead={4}><PenFrameIcon /></IconButton>
              <IconButton aria-label="Pen frame options"><Caret /></IconButton>
              <IconButton aria-label="Customize toolbar" $lead={8}><MoreIcon /></IconButton>
            </QuickAccess>
            <DocTitle>{"Lecture 1  -  PowerPoint"}</DocTitle>
          </TitleBar>
          <ContextTitle>Ink Tools</ContextTitle>
          <WindowActions>
            <SignIn>Sign in</SignIn>
            <IconButton aria-label="Ribbon display options"><RibbonDisplayIcon /></IconButton>
            <IconButton aria-label="Minimize"><MinimizeIcon /></IconButton>
            <IconButton aria-label="Restore"><RestoreIcon /></IconButton>
            <IconButton aria-label="Close"><CloseIcon /></IconButton>
          </WindowActions>
          <Tabs>
            <FileTab>File</FileTab>
            {tabs.map((t) => <Tab key={t}>{t}</Tab>)}
          </Tabs>
          <Tab $active>Pens</Tab>
          <TellMe>
            <InlineLabel $gap={13}><BulbIcon />Tell me what you want to do</InlineLabel>
            <InlineLabel $gap={6}><ShareIcon />Share</InlineLabel>
          </TellMe>
        </Header>

        <Ribbon>
          <Group $width={248}>
            <GroupBody $indent={8}>
              {writeTools.map((t) => (
                <Tool key={t.lines.join(" ")} $width={t.width} $active={t.active}>
                  {t.icon}
                  <ToolText>{t.lines.map((l) => <span key={l}>{l}</span>)}</ToolText>
                  {t.menu && <svg width="6" height="10" viewBox="0 0 6 10"><path d="M0 6h6L3 9.500z" fill="#777" /></svg>}
                </Tool>
              ))}
            </GroupBody>
            <GroupName>Write</GroupName>
          </Group>
          <Group $width={492}>
            <GroupBody>
              <Gallery>
                <Swatches>
                  {swatches.map((s, i) => (
                    <Swatch key={i} $active={s.active} aria-label={`${s.kind} pen ${s.color}`}><PenSwatch kind={s.kind} color={s.color} /></Swatch>
                  ))}
                </Swatches>
                <GallerySteps>
                  <Step aria-label="Previous row"><Chevron up /></Step>
                  <Step aria-label="Next row"><Chevron /></Step>
                  <Step aria-label="More pens"><Chevron bar /></Step>
                </GallerySteps>
              </Gallery>
              <PenOptions>
                <PenOption $gap={3}><ColorIcon />Color <Caret color="#777" /></PenOption>
                <PenOption $gap={3}><ThicknessIcon />Thickness <Caret color="#777" /></PenOption>
              </PenOptions>
            </GroupBody>
            <GroupName>Pens</GroupName>
          </Group>
          <Group $width={58}>
            <GroupBody $center>
              <Tool $width={50}><InkShapeIcon /><ToolText><span>Ink to</span><span>Shape</span></ToolText></Tool>
            </GroupBody>
            <GroupName>Ink Art</GroupName>
          </Group>
          <Group $width={57}>
            <GroupBody $center>
              <Tool $width={50}><StopIcon /><ToolText><span>Stop</span><span>Inking</span></ToolText></Tool>
            </GroupBody>
            <GroupName>Close</GroupName>
          </Group>
          <RibbonEnd><IconButton aria-label="Collapse the ribbon"><svg width="10" height="6" viewBox="0 0 10 6" fill="none" stroke="#555" strokeWidth="1.200"><path d="M.5 5.500L5 1l4.500 4.500" /></svg></IconButton></RibbonEnd>
        </Ribbon>

        <Main>
          <SlideList>
            {[1, 2, 3, 4, 5, 6].map((n) => (
              <SlideItem key={n} $active={n === 2}>
                <SlideNumber>{n}</SlideNumber>
                <Thumb $active={n === 2} aria-label={`Slide ${n}`}>
                  <ThumbPage>{n === 1 && <InkDrawing bold />}</ThumbPage>
                  {n === 2 && (
                    <Pointer width="13" height="19" viewBox="0 0 13 19"><path d="M1 1V16L4.500 13L7 18L9.500 17L7.500 12H12Z" fill="#fff" stroke="#444" /></Pointer>
                  )}
                </Thumb>
              </SlideItem>
            ))}
          </SlideList>
          <ScrollBar>
            <ScrollButton aria-label="Scroll slides up"><Triangle up /></ScrollButton>
            <ScrollTrack><ScrollThumb $percent={66} /></ScrollTrack>
            <ScrollButton aria-label="Scroll slides down"><Triangle /></ScrollButton>
          </ScrollBar>
          <Editor>
            <Stage>
              <Canvas><Slide><InkDrawing /></Slide></Canvas>
              <EditorScroll>
                <ScrollBar>
                  <ScrollButton aria-label="Scroll up"><Triangle up /></ScrollButton>
                  <ScrollTrack><ScrollThumb $percent={12} /></ScrollTrack>
                  <ScrollButton aria-label="Scroll down"><Triangle /></ScrollButton>
                </ScrollBar>
                <ScrollButton $plain aria-label="Previous slide"><Triangle up double /></ScrollButton>
                <ScrollButton $plain aria-label="Next slide"><Triangle double /></ScrollButton>
              </EditorScroll>
            </Stage>
            <NotesPane>
              <NotesInput aria-label="Notes" placeholder="Click to add notes" />
              <NotesScroll>
                <ScrollButton aria-label="Scroll notes up"><Triangle up /></ScrollButton>
                <ScrollButton aria-label="Scroll notes down"><Triangle /></ScrollButton>
              </NotesScroll>
            </NotesPane>
          </Editor>
        </Main>

        <StatusBar>
          <StatusLeft>
            <span>Slide 1 of 8</span>
            <BookIcon />
            <span>English (India)</span>
          </StatusLeft>
          <StatusToggles>
            <InlineLabel><NotesIcon />Notes</InlineLabel>
            <InlineLabel><CommentIcon />Comments</InlineLabel>
          </StatusToggles>
          {viewIcons.map((v, i) => (
            <ViewButton key={v.name} $active={i === 0} aria-label={v.name}>
              <svg width="14" height="13" viewBox="0 0 14 13" fill="none" stroke="#777"><path d={v.path} /></svg>
            </ViewButton>
          ))}
          <Zoom>
            <IconButton aria-label="Zoom out"><svg width="9" height="9" stroke="#999"><path d="M1 4.500h7" /></svg></IconButton>
            <ZoomSlider type="range" aria-label="Zoom" min={0} max={100} defaultValue={30} />
            <IconButton aria-label="Zoom in"><svg width="9" height="9" stroke="#777"><path d="M1 4.500h7M4.500 1v7" /></svg></IconButton>
            <ZoomValue>63%</ZoomValue>
            <IconButton aria-label="Fit slide to window"><FitIcon /></IconButton>
          </Zoom>
        </StatusBar>

        <TaskBar>
          <Start aria-label="Start"><WindowsLogo /></Start>
          <Search><SearchIcon /><input type="search" aria-label="Search" placeholder="Type here to search" /></Search>
          <AppButton $width={48} aria-label="Cortana"><CortanaIcon /></AppButton>
          <Apps>
            <AppButton aria-label="Task view"><TaskViewIcon /></AppButton>
            <AppButton $open aria-label="File Explorer"><ExplorerIcon /></AppButton>
            <AppButton aria-label="Edge"><EdgeIcon /></AppButton>
            <AppButton aria-label="Mail"><MailIcon /></AppButton>
            <AppButton $open aria-label="Teams"><TeamsIcon /></AppButton>
          </Apps>
          <AppButton $width={49} $open $active aria-label="PowerPoint"><PowerPointIcon /></AppButton>
          <Tray>
            <TrayButton $width={28} aria-label="Help"><HelpIcon /></TrayButton>
            <TrayButton $width={26} aria-label="Show hidden icons"><TrayCaret /></TrayButton>
            <TrayButton $width={24} aria-label="Network"><NetworkIcon /></TrayButton>
            <TrayButton $width={24} aria-label="Volume"><SpeakerIcon /></TrayButton>
            <TrayButton $width={32} aria-label="Pen workspace"><TrayPenIcon /></TrayButton>
            <TrayButton $width={36}>ENG</TrayButton>
            <Clock><span>13:50</span><span>03-09-2020</span></Clock>
            <TrayButton $width={38} aria-label="Notifications"><ActionIcon /></TrayButton>
            <DesktopEdge />
          </Tray>
        </TaskBar>
      </Window>
    </>
  );
}
